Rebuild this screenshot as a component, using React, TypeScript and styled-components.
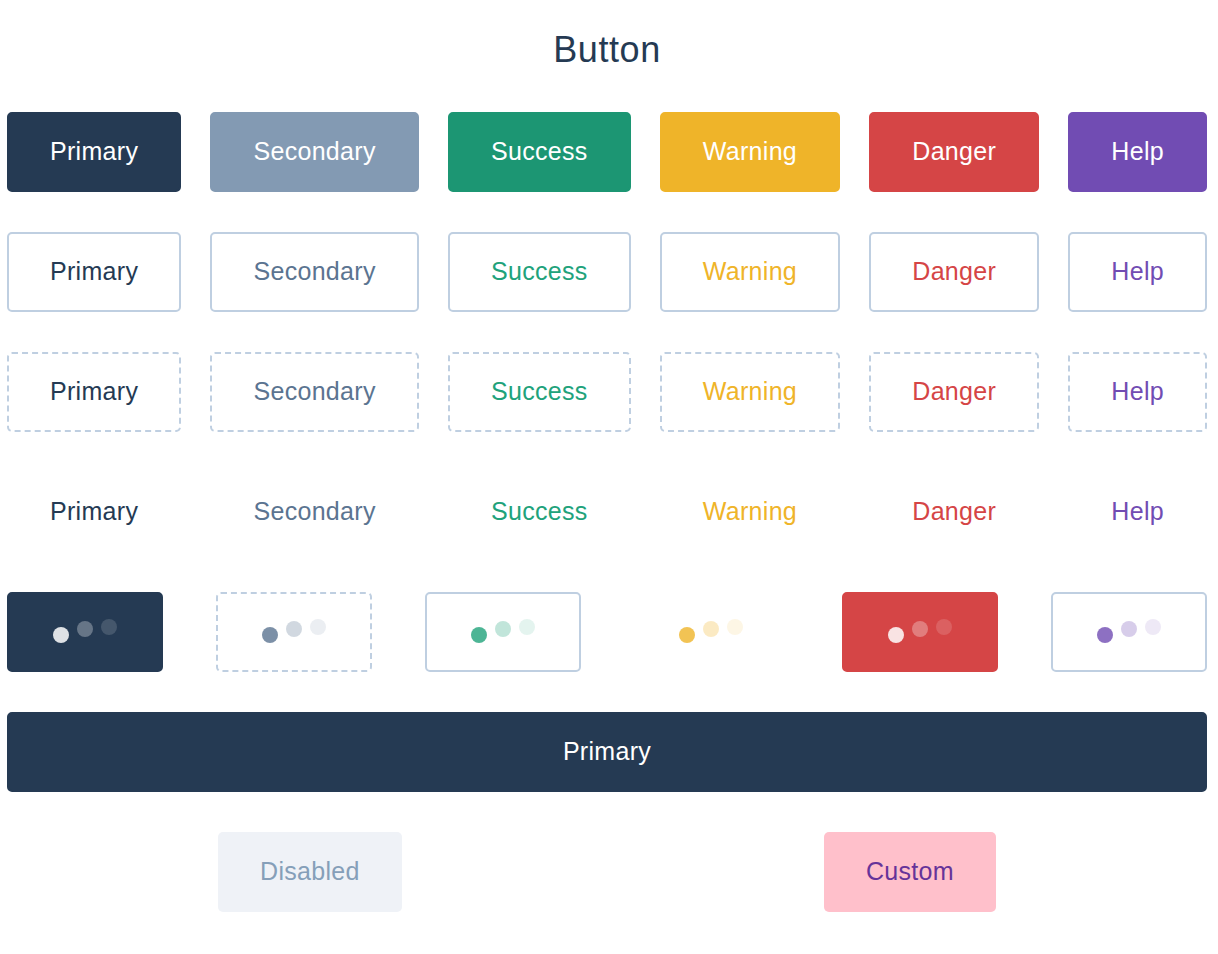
import React from 'react';
import styled, { createGlobalStyle, css } from 'styled-components';

type Kind = 'primary' | 'secondary' | 'success' | 'warning' | 'danger' | 'help';
type Variant = 'solid' | 'outline' | 'dashed' | 'text';

const colors: Record<Kind | 'border', string> = {
  primary: '#253a53',
  secondary: '#839ab3',
  success: '#1c9673',
  warning: '#efb429',
  danger: '#d54546',
  help: '#714cb3',
  border: '#bfcfe1',
};

// text colour used when the button has no fill
const textColors: Record<Kind, string> = {
  primary: '#253a53',
  secondary: '#5b7491',
  success: '#21a27b',
  warning: '#efb429',
  danger: '#d54546',
  help: '#714cb3',
};

const GlobalStyle = createGlobalStyle`
  html, body {
    margin: 0;
    padding: 0;
    background: #ffffff;
  }
  body {
    font-family: "Liberation Sans", Arial, Helvetica, sans-serif;
  }
`;

const Page = styled.div`
  width: 1200px;
  padding: 32px 0 40px 7px;
  display: flex;
  flex-direction: column;
  gap: 40px;
`;

const Title = styled.h1`
  margin: 0 0 4px 0;
  font-size: 36px;
  line-height: 36px;
  font-weight: 400;
  letter-spacing: 0.6px;
  color: #253a53;
  text-align: center;
`;

const Row = styled.div<{ $justify?: string }>`
  display: flex;
  justify-content: ${p => p.$justify || 'space-between'};
  align-items: center;
`;

const Button = styled.button<{ $kind: Kind; $variant: Variant; $width?: string }>`
  box-sizing: border-box;
  height: 80px;
  padding: 0 41px 1px;
  width: ${p => p.$width || 'auto'};
  border-radius: 5px;
  font-family: "Liberation Sans", Arial, Helvetica, sans-serif;
  font-size: 25px;
  letter-spacing: 0.3px;
  display: flex;
  align-items: center;
  justify-content: center;
  gap: 8px;
  cursor: pointer;
  ${p => {
    switch (p.$variant) {
      case 'solid':
        return css`
          background: ${colors[p.$kind]};
          border: 2px solid ${colors[p.$kind]};
          color: #ffffff;
        `;
      case 'outline':
        return css`
          background: #ffffff;
          border: 2px solid ${colors.border};
          color: ${textColors[p.$kind]};
        `;
      case 'dashed':
        return css`
          background: #ffffff;
          border: 2px dashed ${colors.border};
          color: ${textColors[p.$kind]};
        `;
      default:
        return css`
          background: transparent;
          border: 2px solid transparent;
          color: ${textColors[p.$kind]};
        `;
    }
  }}
`;

const Dot = styled.span<{ $color: string; $opacity: number; $shift: number }>`
  width: 16px;
  height: 16px;
  border-radius: 50%;
  background: ${p => p.$color};
  opacity: ${p => p.$opacity};
  transform: translateY(${p => p.$shift}px);
`;

const PlainButton = styled.button<{ $bg: string; $fg: string }>`
  box-sizing: border-box;
  height: 80px;
  padding: 0 42px 1px;
  border: none;
  border-radius: 5px;
  background: ${p => p.$bg};
  color: ${p => p.$fg};
  font-family: "Liberation Sans", Arial, Helvetica, sans-serif;
  font-size: 25px;
  letter-spacing: 0.3px;
  &:disabled {
    cursor: not-allowed;
  }
`;

const kinds: Kind[] = ['primary', 'secondary', 'success', 'warning', 'danger', 'help'];
const labels: Record<Kind, string> = {
  primary: 'Primary',
  secondary: 'Secondary',
  success: 'Success',
  warning: 'Warning',
  danger: 'Danger',
  help: 'Help',
};

const loadingVariants: Variant[] = ['solid', 'dashed', 'outline', 'text', 'solid', 'outline'];

const Loading: React.FC<{ kind: Kind; variant: Variant }> = ({ kind, variant }) => {
  const base = variant === 'solid' ? '#ffffff' : textColors[kind];
  const levels = variant === 'solid' ? [0.85, 0.3, 0.15] : [0.8, 0.28, 0.12];
  const shifts = [3, -3, -5];
  return (
    <Button $kind={kind} $variant={variant} $width="156px" aria-label="loading">
      {levels.map((o, i) => (
        <Dot key={i} $color={base} $opacity={o} $shift={shifts[i]} />
      ))}
    </Button>
  );
};

export default function App() {
  const variants: Variant[] = ['solid', 'outline', 'dashed', 'text'];
  return (
    <>
      <GlobalStyle />
      <Page>
        <Title>Button</Title>
        {variants.map(v => (
          <Row key={v}>
            {kinds.map(k => (
              <Button key={k} $kind={k} $variant={v}>
                {labels[k]}
              </Button>
            ))}
          </Row>
        ))}
        <Row>
          {kinds.map((k, i) => (
            <Loading key={k} kind={k} variant={loadingVariants[i]} />
          ))}
        </Row>
        <Button $kind="primary" $variant="solid" $width="100%">
          Primary
        </Button>
        <Row $justify="space-around">
          <PlainButton $bg="#eff2f7" $fg="#859fb9" disabled>
            Disabled
          </PlainButton>
          <PlainButton $bg="#ffc0cb" $fg="#663399">
            Custom
          </PlainButton>
        </Row>
      </Page>
    </>
  );
}
